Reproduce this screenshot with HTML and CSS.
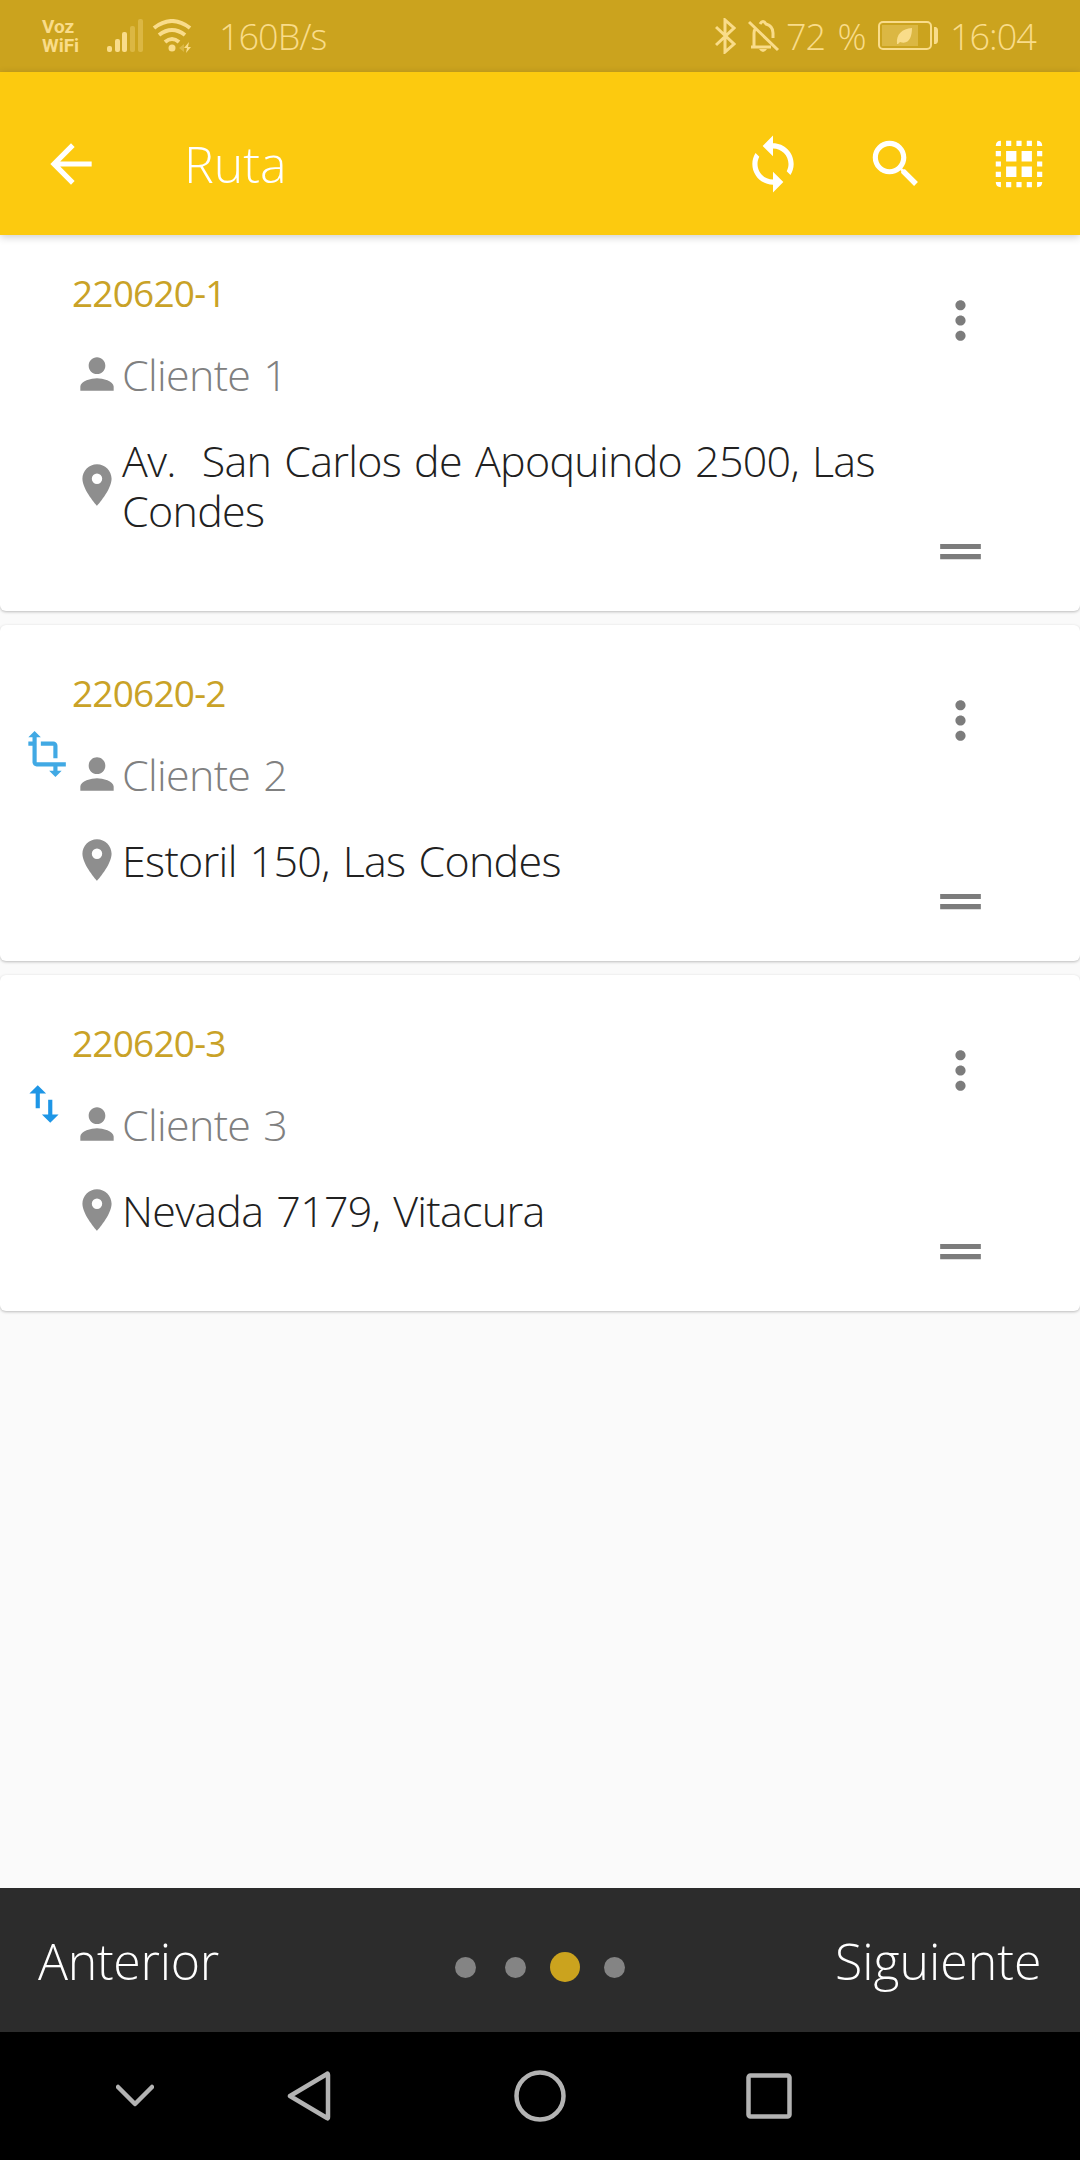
FILE: index.html
```html
<!DOCTYPE html>
<html lang="es">
<head>
    <meta charset="UTF-8">
    <meta name="viewport" content="width=device-width, initial-scale=1.0">
    <title>Ruta</title>
    <link rel="stylesheet" href="styles.css">
</head>
<body>
    <!-- Shared icons -->
    <svg class="icon-defs">
        <symbol id="person" viewBox="0 0 24 24"><path d="M12 12c2.21 0 4-1.79 4-4s-1.79-4-4-4-4 1.79-4 4 1.79 4 4 4zm0 2c-2.67 0-8 1.34-8 4v2h16v-2c0-2.66-5.33-4-8-4z"/></symbol>
        <symbol id="place" viewBox="0 0 24 24"><path d="M12 2C8.13 2 5 5.13 5 9c0 5.25 7 13 7 13s7-7.75 7-13c0-3.87-3.13-7-7-7zm0 9.5a2.5 2.5 0 0 1 0-5 2.5 2.5 0 0 1 0 5z"/></symbol>
        <symbol id="more" viewBox="0 0 24 24"><path d="M12 8c1.1 0 2-.9 2-2s-.9-2-2-2-2 .9-2 2 .9 2 2 2zm0 2c-1.1 0-2 .9-2 2s.9 2 2 2 2-.9 2-2-.9-2-2-2zm0 6c-1.1 0-2 .9-2 2s.9 2 2 2 2-.9 2-2-.9-2-2-2z"/></symbol>
        <symbol id="drag" viewBox="0 0 24 24"><path d="M20 9H4v2h16V9zM4 15h16v-2H4v2z"/></symbol>
    </svg>

    <div class="status-bar">
        <div class="voz"><span>Voz</span><span>WiFi</span></div>
        <svg class="signal" viewBox="0 0 36 34">
            <rect x="0" y="27" width="5" height="6" rx="2"/>
            <rect x="8" y="20" width="5" height="13" rx="2"/>
            <rect x="15" y="13" width="5" height="20" rx="2"/>
            <rect class="dim" x="23" y="7" width="5" height="26" rx="2"/>
            <rect class="dim" x="31" y="0" width="5" height="33" rx="2"/>
        </svg>
        <svg class="wifi" viewBox="0 0 40 34">
            <path class="line" d="M2 9Q20 -5 38 9M7 16Q20 6 33 16M13 23Q20 17 27 23"/>
            <circle cx="20" cy="29" r="3.5"/>
            <path d="M37 23l-5 6h3l-1 5 5-6h-3z"/>
            <path class="dim" d="M32 25l-5 4 5 4z"/>
        </svg>
        <span class="speed">160B/s</span>
        <div class="status-right">
            <svg class="bluetooth" viewBox="0 0 21 36"><path d="M1 9l18 17-9 8V2l9 8L1 27"/></svg>
            <svg class="bell" viewBox="0 0 32 34">
                <path d="M3 28h20M6 27V14q0-3 2-5M12 5q3-5 6 0 7 2 7 9v5M1 3l29 28"/>
                <path class="clapper" d="M11 30h8q-4 6-8 0z"/>
            </svg>
            <span class="percent">72 %</span>
            <svg class="battery" viewBox="0 0 60 30">
                <rect class="case" x="1" y="1" width="52" height="27" rx="4"/>
                <rect class="charge" x="4" y="4" width="36" height="21"/>
                <path d="M19 23c-1-10 5-15 15-16 0 9-3 17-12 14l-2 2zM56 6h2q2 1 2 3v11q0 2-2 3h-2z"/>
            </svg>
            <span class="clock">16:04</span>
        </div>
    </div>

    <header class="app-bar">
        <svg class="icon" viewBox="0 0 24 24"><path d="M20 11H7.83l5.59-5.59L12 4l-8 8 8 8 1.41-1.41L7.83 13H20v-2z"/></svg>
        <h1>Ruta</h1>
        <div class="app-actions">
            <svg class="icon" viewBox="0 0 24 24"><path d="M12 4V1L8 5l4 4V6c3.31 0 6 2.69 6 6 0 1.01-.25 1.97-.7 2.8l1.46 1.46C19.54 15.03 20 13.57 20 12c0-4.42-3.58-8-8-8zm0 14c-3.31 0-6-2.69-6-6 0-1.01.25-1.97.7-2.8L5.24 7.74C4.46 8.97 4 10.43 4 12c0 4.42 3.58 8 8 8v3l4-4-4-4v3z"/></svg>
            <svg class="icon" viewBox="0 0 24 24"><path d="M15.5 14h-.79l-.28-.27C15.41 12.59 16 11.11 16 9.5 16 5.91 13.09 3 9.5 3S3 5.91 3 9.5 5.91 16 9.5 16c1.61 0 3.09-.59 4.23-1.57l.27.28v.79l5 4.99L20.49 19l-4.99-5zm-6 0C7.01 14 5 11.99 5 9.5S7.01 5 9.5 5 14 7.01 14 9.5 11.99 14 9.5 14z"/></svg>
            <svg class="icon" viewBox="0 0 24 24"><path d="M3 5h2V3q-2 0-2 2zM7 3h2v2H7zM11 3h2v2h-2zM15 3h2v2h-2zM19 3v2h2q0-2-2-2zM3 7h2v2H3zM3 11h2v2H3zM3 15h2v2H3zM19 7h2v2h-2zM19 11h2v2h-2zM19 15h2v2h-2zM3 19q0 2 2 2v-2zM7 19h2v2H7zM11 19h2v2h-2zM15 19h2v2h-2zM19 21q2 0 2-2h-2zM7 7h4v4H7zM13 7h4v4h-4zM7 13h4v4H7zM13 13h4v4h-4z"/></svg>
        </div>
    </header>

    <main class="route-list">
        <article class="card">
            <div class="card-mark"></div>
            <div class="card-info">
                <h2>220620-1</h2>
                <div class="row client"><svg><use href="#person"/></svg><p>Cliente 1</p></div>
                <div class="row address"><svg><use href="#place"/></svg><p>Av.&nbsp; San Carlos de Apoquindo 2500, Las Condes</p></div>
            </div>
            <div class="card-actions">
                <svg><use href="#more"/></svg>
                <svg><use href="#drag"/></svg>
            </div>
        </article>

        <article class="card">
            <div class="card-mark">
                <svg class="transform" viewBox="0 0 24 24"><path d="M22 18v-2H8V4h2L7 1 4 4h2v2H4v2h2v8c0 1.1.9 2 2 2h8v2h-2l3 3 3-3h-2v-2h4zM10 8h6v6h2V8c0-1.1-.9-2-2-2h-6v2z"/></svg>
            </div>
            <div class="card-info">
                <h2>220620-2</h2>
                <div class="row client"><svg><use href="#person"/></svg><p>Cliente 2</p></div>
                <div class="row address"><svg><use href="#place"/></svg><p>Estoril 150, Las Condes</p></div>
            </div>
            <div class="card-actions">
                <svg><use href="#more"/></svg>
                <svg><use href="#drag"/></svg>
            </div>
        </article>

        <article class="card">
            <div class="card-mark">
                <svg class="swap" viewBox="0 0 24 24"><path d="M16 17.01V10h-2v7.01h-3L15 21l4-3.99h-3zM9 3L5 6.99h3V14h2V6.99h3L9 3z"/></svg>
            </div>
            <div class="card-info">
                <h2>220620-3</h2>
                <div class="row client"><svg><use href="#person"/></svg><p>Cliente 3</p></div>
                <div class="row address"><svg><use href="#place"/></svg><p>Nevada 7179, Vitacura</p></div>
            </div>
            <div class="card-actions">
                <svg><use href="#more"/></svg>
                <svg><use href="#drag"/></svg>
            </div>
        </article>
    </main>

    <footer class="stepper">
        <span class="prev">Anterior</span>
        <div class="dots">
            <span class="dot"></span>
            <span class="dot"></span>
            <span class="dot active"></span>
            <span class="dot"></span>
        </div>
        <span class="next">Siguiente</span>
    </footer>

    <nav class="nav-bar">
        <svg class="nav-hide" viewBox="0 0 38 24"><path d="M2 3l17 17L36 3"/></svg>
        <svg class="nav-back" viewBox="0 0 44 52"><path d="M3 26L40 4q1-1 1 1v42q0 2-1 1z"/></svg>
        <svg class="nav-home" viewBox="0 0 52 52"><circle cx="26" cy="26" r="23.5"/></svg>
        <svg class="nav-recent" viewBox="0 0 46 46"><rect x="2.5" y="2.5" width="41" height="41" rx="2"/></svg>
    </nav>
</body>
</html>
```
FILE: styles.css
```css
* {
    box-sizing: border-box;
    margin: 0;
    padding: 0;
}

body {
    font-family: "Open Sans", "Noto Sans", sans-serif;
    font-weight: 300;
    background-color: #fafafa;
    display: flex;
    flex-direction: column;
    width: 1080px;
    height: 2160px;
    overflow: hidden;
}

svg {
    display: block;
    flex-shrink: 0;
}

span {
    white-space: nowrap;
}

.icon-defs {
    display: none;
}

/* Status bar */
.status-bar {
    height: 72px;
    padding: 0 43px 0 42px;
    background-color: #cba31e;
    color: #f9dc8a;
    fill: #f9dc8a;
    display: flex;
    align-items: center;
    font-size: 36px;
}

.voz {
    width: 65px;
    display: flex;
    flex-direction: column;
    font-family: Roboto, sans-serif;
    font-size: 19px;
    font-weight: 700;
    line-height: 19px;
}

.signal {
    width: 36px;
    height: 34px;
}

.dim {
    opacity: 0.35;
}

.wifi {
    width: 40px;
    height: 34px;
    margin-left: 9px;
}

.wifi .line {
    fill: none;
    stroke: #f9dc8a;
    stroke-width: 4;
}

.speed {
    margin-left: 27px;
    padding-top: 1px;
    letter-spacing: -1px;
}

.status-right {
    margin-left: auto;
    display: flex;
    align-items: center;
}

.bluetooth {
    width: 21px;
    height: 36px;
    fill: none;
    stroke: #f9dc8a;
    stroke-width: 3;
}

.bell {
    width: 32px;
    height: 34px;
    margin-left: 12px;
    fill: none;
    stroke: #f9dc8a;
    stroke-width: 3;
}

.bell .clapper {
    fill: #f9dc8a;
    stroke: none;
}

.percent {
    width: 80px;
    margin-left: 6px;
    padding-top: 1px;
    letter-spacing: -1px;
    word-spacing: 4px;
}

.battery {
    width: 60px;
    height: 30px;
    margin-left: 12px;
}

.battery .case {
    fill: none;
    stroke: #f9dc8a;
    stroke-width: 2;
}

.battery .charge {
    opacity: 0.35;
}

.clock {
    width: 87px;
    margin-left: 12px;
    padding-top: 1px;
    letter-spacing: -1px;
}

/* App bar */
.app-bar {
    position: relative;
    z-index: 1;
    height: 163px;
    padding: 20px 30px 0 40px;
    background-color: #fcca0f;
    color: #fff;
    fill: #fff;
    display: flex;
    align-items: center;
    box-shadow: 0 2px 8px rgba(0, 0, 0, 0.2);
}

.icon {
    width: 62px;
    height: 62px;
}

.app-bar h1 {
    margin-left: 82px;
    padding-top: 1px;
    font-size: 50px;
    font-weight: 300;
    line-height: 60px;
}

.app-actions {
    margin-left: auto;
    display: flex;
    gap: 61px;
}

/* Cards, the first one slides under the app bar */
.route-list {
    flex: 1;
    margin-top: -10px;
    display: flex;
    flex-direction: column;
    gap: 14px;
}

.card {
    display: flex;
    background-color: #fff;
    border-radius: 6px;
    box-shadow: 0 1px 3px rgba(0, 0, 0, 0.25);
}

.card-mark {
    flex-shrink: 0;
    width: 72px;
    padding: 104px 0 0 20px;
    fill: #1e96e6;
}

.card-mark svg {
    width: 50px;
    height: 50px;
}

.card-mark .transform {
    fill: #41a9e4;
}

.card-mark .swap {
    margin-left: -1px;
}

.card-info {
    flex: 1;
    min-width: 0;
    padding: 43px 0 75px;
}

.card-info h2 {
    color: #c9a227;
    font-size: 37px;
    font-weight: 400;
    line-height: 50px;
    letter-spacing: -0.8px;
}

.row {
    display: flex;
    align-items: center;
    font-size: 43px;
    line-height: 50px;
    letter-spacing: -0.7px;
    word-spacing: 2.5px;
}

.row svg {
    width: 50px;
    height: 50px;
    margin-top: -2px;
    fill: #8e8e8e;
}

.client {
    margin-top: 32px;
    color: #808080;
}

.address {
    margin-top: 36px;
    color: #212121;
}

.card-actions {
    flex-shrink: 0;
    width: 190px;
    padding: 65px 50px 29px 0;
    display: flex;
    flex-direction: column;
    align-items: center;
    justify-content: space-between;
    fill: #7c7c7c;
}

.card-actions svg {
    width: 61px;
    height: 61px;
}

/* Bottom stepper */
.stepper {
    height: 144px;
    padding: 0 38px;
    background-color: #2c2c2c;
    color: #fff;
    display: flex;
    align-items: center;
    justify-content: space-between;
    font-size: 50px;
}

.prev, .next {
    width: 207px;
    padding-top: 2px;
}

.prev {
    letter-spacing: -0.3px;
}

.dots {
    display: flex;
    align-items: center;
    gap: 29px;
    padding-top: 14px;
}

.dot {
    width: 21px;
    height: 21px;
    border-radius: 50%;
    background-color: #848484;
}

.dot.active {
    width: 30px;
    height: 30px;
    margin: 0 -5px;
    background-color: #cba31e;
}

/* System navigation */
.nav-bar {
    height: 128px;
    padding-left: 116px;
    background-color: #000;
    display: flex;
    align-items: center;
    fill: none;
    stroke: #b3b3b3;
    stroke-width: 4.5;
    stroke-linecap: round;
    stroke-linejoin: round;
}

.nav-hide {
    width: 38px;
    height: 24px;
}

.nav-back {
    width: 44px;
    height: 52px;
    margin-left: 133px;
}

.nav-home {
    width: 52px;
    height: 52px;
    margin-left: 183px;
}

.nav-recent {
    width: 46px;
    height: 46px;
    margin-left: 180px;
}
```
